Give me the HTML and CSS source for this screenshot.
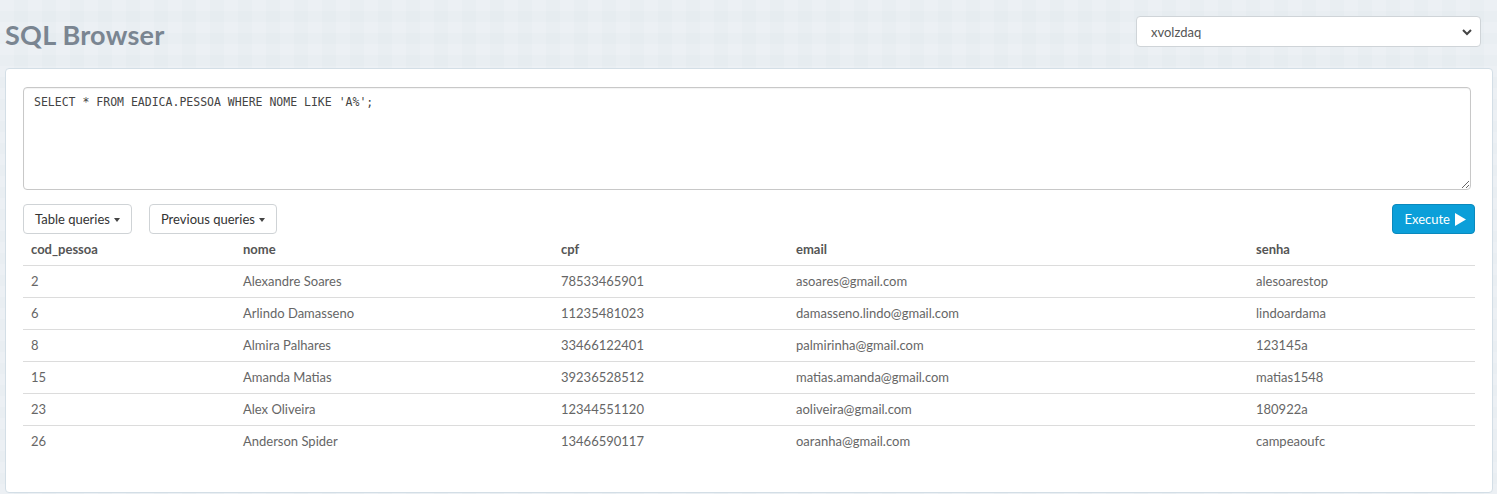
FILE: index.html
```html
<!DOCTYPE html>
<html>
<head>
<meta charset="utf-8">
<title>SQL Browser</title>
<link rel="stylesheet" href="styles.css">
</head>
<body>
<div class="page">
  <header class="topbar">
    <h1 class="title">SQL Browser</h1>
    <div class="select-wrap">
      <select class="db-select"><option>xvolzdaq</option></select>
      <svg class="chev" width="10" height="8" viewBox="0 0 10 8"><path d="M1 2 L5 6 L9 2" fill="none" stroke="#444" stroke-width="2"/></svg>
    </div>
  </header>
  <main class="panel">
    <textarea class="query" spellcheck="false">SELECT * FROM EADICA.PESSOA WHERE NOME LIKE 'A%';</textarea>
    <div class="toolbar">
      <div class="left-btns">
        <button class="btn">Table queries <span class="caret"></span></button>
        <button class="btn">Previous queries <span class="caret"></span></button>
      </div>
      <button class="btn btn-primary">Execute <svg class="play" width="11" height="13" viewBox="0 0 11 13"><path d="M0 0 L11 6.5 L0 13 Z" fill="#fff"/></svg></button>
    </div>
    <table class="results">
      <colgroup>
        <col class="c1"><col class="c2"><col class="c3"><col class="c4"><col class="c5">
      </colgroup>
      <thead>
        <tr><th>cod_pessoa</th><th>nome</th><th>cpf</th><th>email</th><th>senha</th></tr>
      </thead>
      <tbody>
        <tr><td>2</td><td>Alexandre Soares</td><td>78533465901</td><td>asoares@gmail.com</td><td>alesoarestop</td></tr>
        <tr><td>6</td><td>Arlindo Damasseno</td><td>11235481023</td><td>damasseno.lindo@gmail.com</td><td>lindoardama</td></tr>
        <tr><td>8</td><td>Almira Palhares</td><td>33466122401</td><td>palmirinha@gmail.com</td><td>123145a</td></tr>
        <tr><td>15</td><td>Amanda Matias</td><td>39236528512</td><td>matias.amanda@gmail.com</td><td>matias1548</td></tr>
        <tr><td>23</td><td>Alex Oliveira</td><td>12344551120</td><td>aoliveira@gmail.com</td><td>180922a</td></tr>
        <tr><td>26</td><td>Anderson Spider</td><td>13466590117</td><td>oaranha@gmail.com</td><td>campeaoufc</td></tr>
      </tbody>
    </table>
  </main>
</div>
</body>
</html>
```

FILE: styles.css
```css
* { box-sizing: border-box; }
html, body { margin: 0; padding: 0; }
body {
  background-color: #e6ecf0;
  background-image:
    linear-gradient(90deg, rgba(255,255,255,0.12) 50%, rgba(0,0,0,0) 50%),
    linear-gradient(rgba(255,255,255,0.10) 50%, rgba(0,0,0,0) 50%);
  background-size: 28px 28px, 22px 22px;
  font-family: Lato, "Noto Sans", sans-serif;
  font-size: 13px;
  color: #666;
  height: 494px;
  overflow: hidden;
}
.page { padding: 0 4px 0 5px; }
.topbar {
  display: flex;
  justify-content: space-between;
  align-items: flex-start;
  height: 68px;
}
.title {
  margin: 18px 0 0 0;
  font-size: 27px;
  line-height: 34px;
  font-weight: 700;
  color: #7a8591;
  letter-spacing: 0.25px;
}
.select-wrap {
  margin: 16px 12px 0 0;
  position: relative;
  width: 345px;
  height: 31px;
}
.db-select {
  appearance: none;
  -webkit-appearance: none;
  width: 100%;
  height: 31px;
  border: 1px solid #cfd4d8;
  border-radius: 4px;
  background: #fff;
  padding: 0 14px;
  font-family: Lato, "Noto Sans", sans-serif;
  font-size: 13px;
  color: #555;
}
.chev { position: absolute; right: 9px; top: 12px; }
.panel {
  background: #fff;
  border: 1px solid #d3dee6;
  border-radius: 4px;
  padding: 18px 21px 35px 17px;
  height: 425px;
}
.query {
  display: block;
  width: 100%;
  height: 103px;
  border: 1px solid #c8c8c8;
  border-radius: 4px;
  padding: 7px 10px;
  font-family: "DejaVu Sans Mono", "Liberation Mono", monospace;
  font-size: 11.5px;
  line-height: 15px;
  color: #444;
  resize: vertical;
  box-shadow: inset 0 1px 1px rgba(0,0,0,0.05);
}
.toolbar {
  display: flex;
  justify-content: space-between;
  margin-top: 14px;
  height: 30px;
  margin-right: -4px;
}
.left-btns { display: flex; gap: 17px; }
.btn {
  height: 30px;
  border: 1px solid #cfd3d6;
  border-radius: 4px;
  background: #fff;
  padding: 0 11px;
  font-family: Lato, "Noto Sans", sans-serif;
  font-size: 13px;
  color: #333;
  display: flex;
  align-items: center;
  gap: 4px;
}
.caret {
  display: inline-block;
  width: 0; height: 0;
  border-left: 3.5px solid transparent;
  border-right: 3.5px solid transparent;
  border-top: 4px solid #444;
  margin-top: 1px;
}
.btn-primary {
  background: #0b9fd9;
  border-color: #0a89bd;
  color: #fff;
  padding: 0 8px 0 11px;
  gap: 5px;
}
.results {
  width: calc(100% + 4px);
  border-collapse: collapse;
  table-layout: fixed;
}
.c1 { width: 212px; }
.c2 { width: 318px; }
.c3 { width: 235px; }
.c4 { width: 460px; }
.c5 { width: auto; }
.results th, .results td {
  text-align: left;
  padding: 8px 8px;
  line-height: 15px;
  white-space: nowrap;
}
.results th {
  font-weight: 700;
  color: #555;
  border-bottom: 1px solid #dcdcdc;
}
.results td { color: #666; }
.results tbody tr + tr td { border-top: 1px solid #dcdcdc; }
```
